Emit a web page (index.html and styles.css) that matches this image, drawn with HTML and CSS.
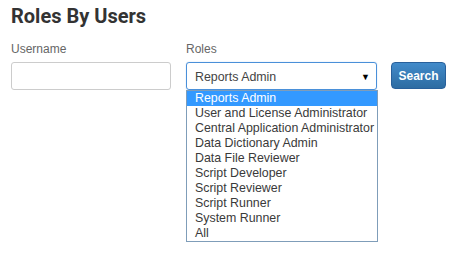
FILE: index.html
```html
<!DOCTYPE html>
<html>
<head>
<meta charset="utf-8">
<link rel="stylesheet" href="styles.css">
</head>
<body>
<div class="page">
  <h1 class="title">Roles By Users</h1>
  <div class="form-row">
    <div class="field field-user">
      <div class="label">Username</div>
      <div class="input"></div>
    </div>
    <div class="field field-roles">
      <div class="label">Roles</div>
      <div class="select-wrap">
        <div class="select">
          <span class="select-text">Reports Admin</span>
          <span class="arrow">▼</span>
        </div>
        <div class="role-list">
          <div class="opt selected">Reports Admin</div>
          <div class="opt">User and License Administrator</div>
          <div class="opt">Central Application Administrator</div>
          <div class="opt">Data Dictionary Admin</div>
          <div class="opt">Data File Reviewer</div>
          <div class="opt">Script Developer</div>
          <div class="opt">Script Reviewer</div>
          <div class="opt">Script Runner</div>
          <div class="opt">System Runner</div>
          <div class="opt">All</div>
        </div>
      </div>
    </div>
    <div class="field field-btn">
      <div class="btn">Search</div>
    </div>
  </div>
</div>
</body>
</html>
```
FILE: styles.css
```css
html, body {
  margin: 0;
  padding: 0;
  background: #fff;
}
html {
  height: 100%;
}
body {
  min-height: 100%;
  font-family: "Liberation Sans", Arial, sans-serif;
  color: #333;
}
.page {
  padding: 4px 11px 0 11px;
  min-height: 249px;
}
.title {
  font-family: Roboto, "Liberation Sans", sans-serif;
  font-weight: 700;
  font-size: 20px;
  line-height: 24px;
  margin: 0 0 14px 0;
  color: #333;
}
.form-row {
  display: flex;
  align-items: flex-start;
}
.field {
  display: flex;
  flex-direction: column;
}
.field-user {
  width: 160px;
  margin-right: 15px;
}
.field-roles {
  width: 192px;
  margin-right: 13px;
}
.field-btn {
  padding-top: 20px;
}
.label {
  font-size: 12px;
  line-height: 14px;
  color: #666;
  margin-bottom: 6px;
}
.input {
  box-sizing: border-box;
  height: 28px;
  border: 1px solid #ccc;
  border-radius: 3px;
  background: #fff;
}
.select-wrap {
  position: relative;
  height: 28px;
}
.select {
  box-sizing: border-box;
  width: 191px;
  height: 28px;
  border: 1px solid #4a90d9;
  border-radius: 3px;
  box-shadow: 0 0 1px rgba(74,144,217,0.6);
  display: flex;
  align-items: center;
  justify-content: space-between;
  padding: 1px 6px 0 8px;
  font-size: 12.4px;
  color: #444;
}
.arrow {
  font-size: 9px;
  color: #000;
}
.role-list {
  position: absolute;
  top: 28px;
  left: 0;
  z-index: 5;
  width: 192px;
  box-sizing: border-box;
  margin: 0;
  padding: 0;
  border: 1px solid #7f9db9;
  background: #fff;
}
.opt {
  font-size: 12.4px;
  line-height: 15px;
  height: 15px;
  padding-left: 8px;
  color: #3a3a3a;
  white-space: nowrap;
}
.opt.selected {
  background: #3399ff;
  color: #fff;
}
.btn {
  box-sizing: border-box;
  width: 55px;
  height: 27px;
  border: 1px solid #28609b;
  border-radius: 4px;
  background: linear-gradient(#428bca, #2d6ca2);
  color: #fff;
  font-weight: 700;
  font-size: 12px;
  display: flex;
  align-items: center;
  justify-content: center;
}
```
